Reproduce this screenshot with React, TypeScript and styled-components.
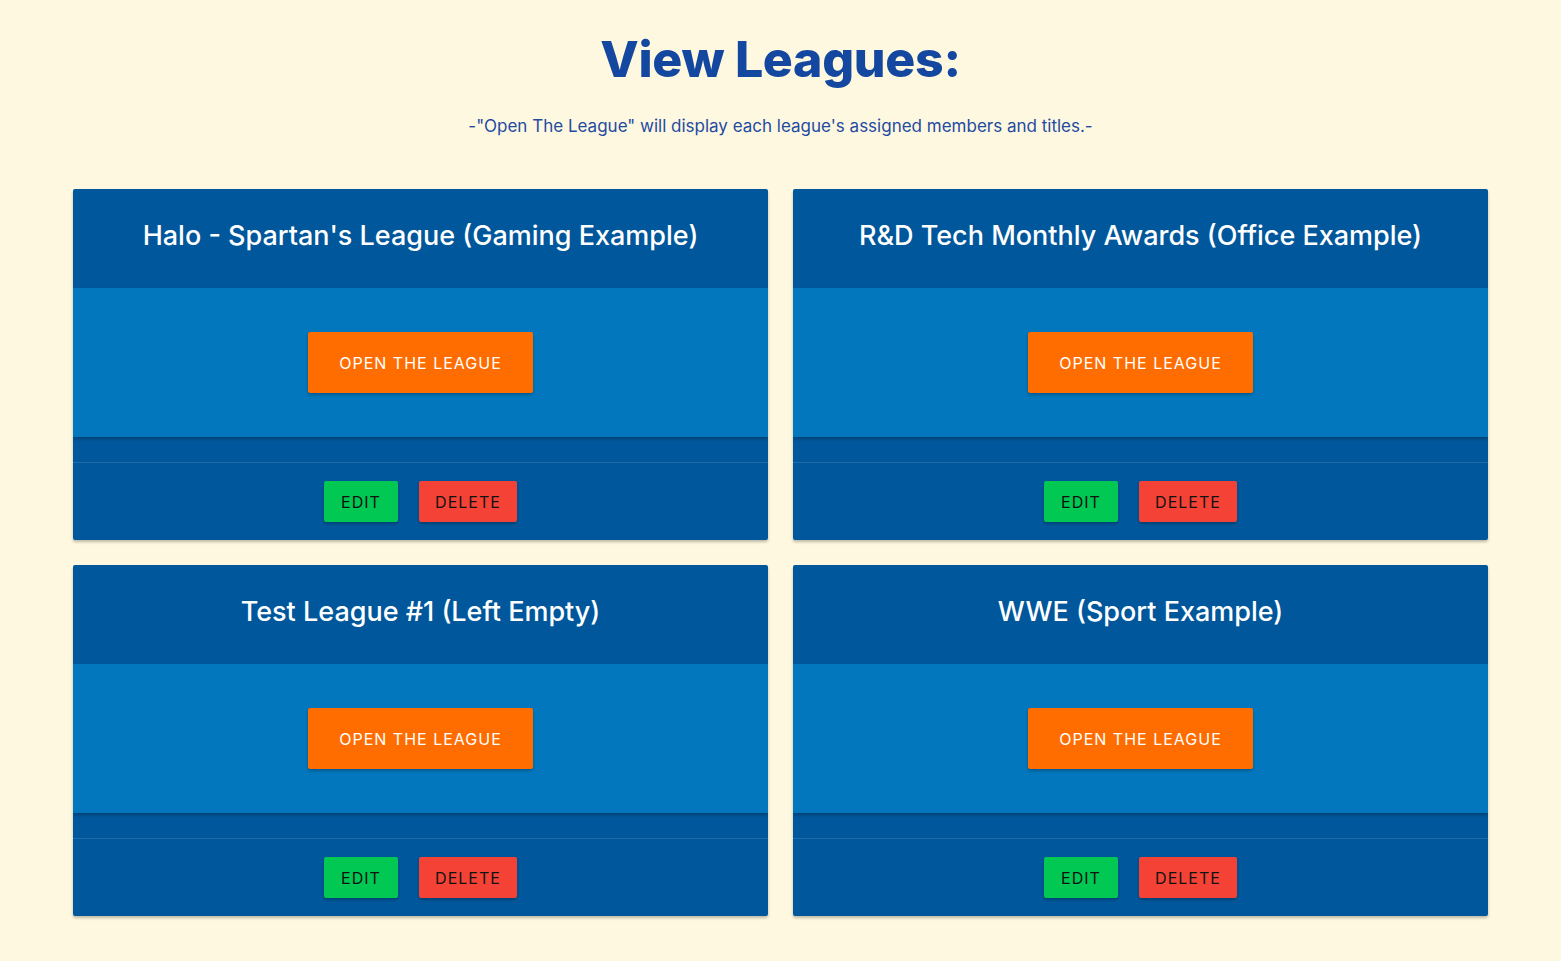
import styled, { createGlobalStyle } from 'styled-components';

const GlobalStyle = createGlobalStyle`
    body {
        margin: 0;
        background: #fef8e0;
        font-family: Inter, "Noto Sans", sans-serif;
    }
`;

const Page = styled.div`
    padding: 27px 73px 46px;
`;

const Heading = styled.h1`
    margin: 0;
    text-align: center;
    font-size: 50px;
    font-weight: 800;
    letter-spacing: -0.3px;
    color: #1447a0;
    line-height: 64px;
`;

const SubHeading = styled.p`
    margin: 25px 0 53px;
    text-align: center;
    font-size: 17px;
    line-height: 20px;
    color: #1f4ba0;
`;

const Grid = styled.div`
    display: grid;
    grid-template-columns: 1fr 1fr;
    gap: 25px;
`;

const Card = styled.div`
    background: #00579b;
    border-radius: 2px;
    box-shadow: 0 2px 3px rgba(0, 0, 0, 0.25);
    overflow: hidden;
`;

const CardTitle = styled.h2`
    margin: 0;
    height: 99px;
    display: flex;
    align-items: center;
    justify-content: center;
    padding-bottom: 6px;
    box-sizing: border-box;
    font-size: 27px;
    font-weight: 500;
    color: #ffffff;
`;

const CardBody = styled.div`
    height: 149px;
    background: #0277bd;
    display: flex;
    justify-content: center;
    padding-top: 44px;
    box-sizing: border-box;
    box-shadow: 0 2px 3px rgba(0, 0, 0, 0.25);
`;

const Spacer = styled.div`
    height: 25px;
    border-bottom: 1px solid rgba(255, 255, 255, 0.13);
`;

const Footer = styled.div`
    height: 77px;
    display: flex;
    justify-content: center;
    gap: 21px;
    padding-top: 18px;
    box-sizing: border-box;
`;

const Button = styled.button<{ $bg: string; $fg: string; $w: number; $h: number }>`
    width: ${p => p.$w}px;
    height: ${p => p.$h}px;
    background: ${p => p.$bg};
    color: ${p => p.$fg};
    border: none;
    border-radius: 2px;
    box-shadow: 0 2px 3px rgba(0, 0, 0, 0.25);
    font-family: Inter, "Noto Sans", sans-serif;
    font-size: 16px;
    letter-spacing: 1px;
    text-transform: uppercase;
    cursor: pointer;
`;

const leagues = [
    'Halo - Spartan\'s League (Gaming Example)',
    'R&D Tech Monthly Awards (Office Example)',
    'Test League #1 (Left Empty)',
    'WWE (Sport Example)',
];

const LeagueCard = ({ name }: { name: string }) => (
    <Card>
        <CardTitle>{name}</CardTitle>
        <CardBody>
            <Button $bg="#ff6d00" $fg="#ffffff" $w={225} $h={61}>Open the League</Button>
        </CardBody>
        <Spacer />
        <Footer>
            <Button $bg="#00c853" $fg="#111111" $w={74} $h={41}>Edit</Button>
            <Button $bg="#f44336" $fg="#111111" $w={98} $h={41}>Delete</Button>
        </Footer>
    </Card>
);

const App = () => (
    <>
        <GlobalStyle />
        <Page>
            <Heading>View Leagues:</Heading>
            <SubHeading>-"Open The League" will display each league's assigned members and titles.-</SubHeading>
            <Grid>
                {leagues.map(l => <LeagueCard key={l} name={l} />)}
            </Grid>
        </Page>
    </>
);

export default App;
